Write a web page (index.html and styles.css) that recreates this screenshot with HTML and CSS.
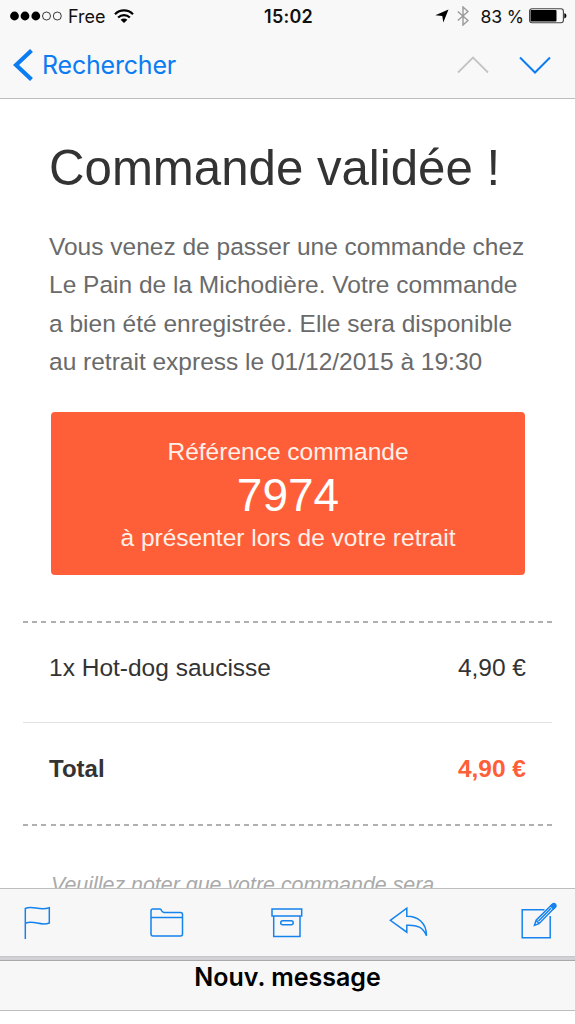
FILE: index.html
```html
<!DOCTYPE html>
<html lang="fr">
<head>
<meta charset="utf-8">
<title>Commande validée</title>
<link rel="stylesheet" href="styles.css">
</head>
<body>
<div class="screen">
  <header class="top">
    <div class="status">
      <div class="carrier">
        <svg width="53" height="10" viewBox="0 0 53 10"><g fill="#000"><circle cx="4.5" cy="5" r="4.4"/><circle cx="15" cy="5" r="4.4"/><circle cx="25.8" cy="5" r="4.4"/></g><g fill="none" stroke="#222" stroke-width=".9"><circle cx="36.5" cy="5" r="4"/><circle cx="47.3" cy="5" r="4"/></g></svg>
        <span class="network">Free</span>
        <svg width="20" height="15" viewBox="0 0 20 15" fill="none" stroke="#000" stroke-width="2.2"><path d="M1 5.2C6 .2 14 .2 19 5.2M4.1 8.5c3.4-3.2 8.400-3.200 11.800 0"/><path d="M10 14 6.600 10.800c1.900-1.700 4.900-1.700 6.800 0z" fill="#000" stroke="none"/></svg>
      </div>
      <div class="clock">15:02</div>
      <div class="power">
        <svg width="14" height="14" viewBox="0 0 14 14"><path d="M13.500.500 8.300 13.500 7.300 7 .300 6.200z"/></svg>
        <svg class="bluetooth" width="12" height="20" viewBox="0 0 12 20" fill="none" stroke="#999" stroke-width="1.400"><path d="M.8 5.500 11 14.500 6 19V1l5 4.500L.8 14.500"/></svg>
        <span class="percent">83 %</span>
        <svg width="38" height="16" viewBox="0 0 38 16"><rect x=".6" y=".8" width="33.800" height="14" rx="2.500" fill="none" stroke="#444" stroke-width="1.100"/><rect x="1.500" y="2" width="26" height="11.600" rx="1"/><path d="M35.300 5.300c2.800.2 2.800 4.900 0 5.100z"/></svg>
      </div>
    </div>
    <nav class="nav">
      <div class="back">
        <svg width="20" height="32" viewBox="0 0 20 32" fill="none" stroke="#0b7cf2" stroke-width="4.200"><path d="M18.500 1.500 3 16l15.500 14.500"/></svg>
        <span class="back-label">Rechercher</span>
      </div>
      <div class="arrows">
        <svg width="32" height="18" viewBox="0 0 32 18" fill="none" stroke="#c4c4c6" stroke-width="1.800"><path d="M1 16.500 16 1.500l15 15"/></svg>
        <svg width="32" height="18" viewBox="0 0 32 18" fill="none" stroke="#0b7cf2" stroke-width="2"><path d="m1 1.500 15 15 15-15"/></svg>
      </div>
    </nav>
  </header>
  <main class="mail">
    <h1 class="title">Commande validée !</h1>
    <p class="intro">
      <span class="row">Vous venez de passer une commande chez</span>
      <span class="row">Le Pain de la Michodière. Votre commande</span>
      <span class="row">a bien été enregistrée. Elle sera disponible</span>
      <span class="row">au retrait express le 01/12/2015 à 19:30</span>
    </p>
    <section class="reference">
      <div class="ref-text">Référence commande</div>
      <div class="ref-number">7974</div>
      <div class="ref-text">à présenter lors de votre retrait</div>
    </section>
    <section class="order">
      <div class="dashes"></div>
      <div class="line item"><span>1x Hot-dog saucisse</span><span>4,90 €</span></div>
      <div class="line total"><span class="total-label">Total</span><span class="amount">4,90 €</span></div>
      <div class="dashes"></div>
    </section>
    <p class="note">Veuillez noter que votre commande sera</p>
  </main>
  <footer class="toolbar">
    <svg class="flag" width="28" height="34" viewBox="0 0 28 34"><path d="M1.300 33V2.500C9-1.200 15 5.500 25.300 1.800V17C16 20.500 10 13.500 1.300 17.300"/></svg>
    <svg class="folder" width="34" height="30" viewBox="0 0 34 30"><path d="M1 26V3q0-2 2-2h7q1 0 1.500 1.500T14 4.500h16.500q2 0 2 2V26q0 2-2 2H3q-2 0-2-2zM1 9.500h31.500"/></svg>
    <svg class="archive" width="32" height="30" viewBox="0 0 32 30"><path d="M1 1h29.700v7H1zM2.700 8v20.500h26.300V8"/><rect x="9.700" y="12.700" width="12.500" height="4" rx="2"/></svg>
    <svg class="reply" width="40" height="31" viewBox="0 0 40 31"><path d="M1.300 13.300 17.800 1.200v8c10.700-.2 19.700 6.500 19.700 19.500-3.500-8.200-9-11-19.700-10.500v7z"/></svg>
    <svg class="compose" width="37" height="37" viewBox="0 0 37 37"><path d="M23.500 7.700H1.200v28h28V14"/><path d="m13.500 23.200 1.600-5L31 2.500q2-1.500 3 0t0 2.800L18 21.700zM15.500 18.400l2.500 3M17.500 19 30 6.200"/><path d="m29.700 4 2.800 3 2-1.900q1-1.500-.2-2.800t-2.700 0z" fill="#1583ee"/></svg>
  </footer>
  <div class="edge"></div>
  <div class="draft">Nouv. message</div>
</div>
</body>
</html>
```
FILE: styles.css
```css
* { box-sizing: border-box; }
body { margin: 0; background: #fff; }
svg { display: block; flex: none; }
.screen { width: 575px; height: 1024px; display: flex; flex-direction: column; overflow: hidden; font-family: "Liberation Sans", Arial, sans-serif; color: #333; white-space: nowrap; }
.top { height: 99px; flex: none; background: #f8f8f8; border-bottom: 1px solid #bdbdbf; font-family: Inter, sans-serif; }
.status { display: grid; grid-template-columns: 1fr auto 1fr; align-items: center; height: 32px; padding: 0 8px 0 10px; color: #111; font-size: 18px; }
.carrier, .power { display: flex; align-items: center; }
.network { margin: 0 8px 0 5px; }
.clock { font-weight: 600; letter-spacing: .2px; }
.power { justify-content: flex-end; }
.bluetooth { margin: 0 11px 0 8px; }
.percent { margin-right: 5px; font-size: 17.6px; letter-spacing: -.1px; }
.nav { display: flex; justify-content: space-between; align-items: center; height: 66px; padding: 0 24px 0 13px; }
.back { display: flex; align-items: center; gap: 9px; color: #0b7cf2; font-size: 25px; letter-spacing: -.2px; }
.arrows { display: flex; gap: 30px; }
.mail { height: 789px; flex: none; overflow: hidden; padding: 41px 23px 0; }
.title { margin: 0 26px; font-size: 49.2px; line-height: 56px; font-weight: 400; }
.intro { margin: 32px 26px 0; font-size: 24.5px; line-height: 38.4px; color: #6a6a6a; }
.row { display: block; }
.reference { margin: 30px 27px 0 28px; height: 163px; padding-top: 26px; border-radius: 4px; background: #ff5f38; color: #fff; text-align: center; }
.ref-text { font-size: 24.5px; line-height: 28px; color: #fff1ea; }
.ref-number { font-size: 46px; line-height: 58px; }
.order { margin-top: 46px; }
.dashes { height: 2px; background: repeating-linear-gradient(90deg, #b0b0b0 0 5px, transparent 5px 9.2px); }
.line { display: flex; justify-content: space-between; align-items: center; height: 100px; padding: 0 26px 8px; font-size: 24.5px; }
.item { border-bottom: 1px solid #e3e3e3; }
.total { height: 101px; font-weight: 700; }
.total-label { font-size: 24px; }
.amount { color: #ff5f38; }
.note { margin: 44px 28px 0; font-size: 21.4px; line-height: 30px; font-style: italic; color: #aaa; }
.toolbar { height: 68px; flex: none; display: flex; align-items: center; padding-left: 24px; border-top: 1px solid #bdbdbf; background: #f7f7f7; fill: none; stroke: #1583ee; stroke-width: 1.5; }
.folder { margin-left: 98px; }
.archive { margin-left: 87px; }
.reply { margin-left: 86px; }
.compose { margin: 0 0 5px 92px; }
.edge { height: 5px; flex: none; background: #d1d1d6; border-top: 1px solid #c5c5ca; border-bottom: 1px solid #a9a9ac; }
.draft { height: 50px; flex: none; border-bottom: 1px solid #bdbdbf; background: #f7f7f7; color: #000; text-align: center; font: 600 25px/32px Inter, sans-serif; }
```
